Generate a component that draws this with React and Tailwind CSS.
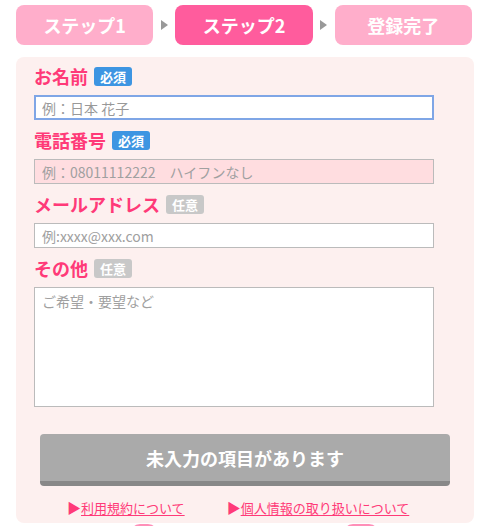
import React from "react";

const font = { fontFamily: '"Noto Sans CJK JP", "Noto Sans", sans-serif' };

const Badge = ({ required }) => (
    <span
        className={`ml-[6px] inline-flex h-[19px] w-[38px] items-center justify-center rounded-[3px] text-[13px] font-bold leading-none text-white ${required ? "bg-[#3d95e2]" : "bg-[#c8c8c8]"}`}
    >
        {required ? "必須" : "任意"}
    </span>
);

const Field = ({ label, required, children, first }) => (
    <div className={first ? "" : "mt-[9px]"}>
        <div className="flex h-[22px] items-center">
            <span className="text-[18px] font-bold leading-none text-[#ff3a78]">{label}</span>
            <Badge required={required} />
        </div>
        <div className="mt-[8px]">{children}</div>
    </div>
);

const Step = ({ label, active }) => (
    <div
        className={`flex h-[40px] w-[138px] items-center justify-center rounded-[8px] text-[18px] font-bold text-white ${active ? "bg-[#ff5c9d]" : "bg-[#ffaecb]"}`}
    >
        {label}
    </div>
);

const Arrow = () => (
    <div className="flex w-[22px] items-center justify-center">
        <svg width="7" height="10" viewBox="0 0 7 10">
            <polygon points="0,0 7,5 0,10" fill="#999" />
        </svg>
    </div>
);

export default function App() {
    return (
        <div className="min-h-[526px] bg-white" style={font}>
            {/* Steps */}
            <div className="flex px-[16px] pt-[5px]">
                <Step label="ステップ1" />
                <Arrow />
                <Step label="ステップ2" active />
                <Arrow />
                <Step label="登録完了" />
            </div>

            {/* Form panel */}
            <div className="mx-[16px] mt-[12px] w-[458px] rounded-[8px] bg-[#fdf0ef] pb-[7px] pl-[18px] pt-[8px]">
                <Field label="お名前" required first>
                    <input
                        type="text"
                        placeholder="例：日本 花子"
                        className="block h-[25px] w-[400px] border-2 border-[#7fa6e6] bg-white px-[6px] text-[14px] text-[#333] outline-none placeholder:text-[#999]"
                    />
                </Field>
                <Field label="電話番号" required>
                    <input
                        type="text"
                        placeholder="例：08011112222　ハイフンなし"
                        className="block h-[25px] w-[400px] border border-[#bbbbbb] bg-[#ffdde0] px-[7px] text-[14px] text-[#333] outline-none placeholder:text-[#a0a0a0]"
                    />
                </Field>
                <Field label="メールアドレス">
                    <input
                        type="text"
                        placeholder="例:xxxx@xxx.com"
                        className="block h-[25px] w-[400px] border border-[#bbbbbb] bg-white px-[7px] text-[14px] text-[#333] outline-none placeholder:text-[#a0a0a0]"
                    />
                </Field>
                <Field label="その他">
                    <textarea
                        placeholder="ご希望・要望など"
                        className="block h-[120px] w-[400px] resize-none border border-[#bbbbbb] bg-white px-[7px] py-[3px] text-[14px] text-[#333] outline-none placeholder:text-[#a0a0a0]"
                    />
                </Field>

                {/* Submit */}
                <div className="mt-[27px] pl-[6px]">
                    <button
                        type="button"
                        className="flex h-[52px] w-[410px] items-center justify-center rounded-[4px] border-b-[5px] border-[#888888] bg-[#aaaaaa] pt-[2px] text-[18px] font-bold text-white"
                    >
                        未入力の項目があります
                    </button>
                </div>

                {/* Links */}
                <div className="mt-[12px] flex h-[18px] items-center pl-[33px] text-[13px] leading-none text-[#ff3a78]">
                    <a href="#" className="flex items-center">
                        <span className="text-[14px]">▶</span>
                        <span className="underline underline-offset-2">利用規約について</span>
                    </a>
                    <a href="#" className="ml-[42px] flex items-center">
                        <span className="text-[14px]">▶</span>
                        <span className="underline underline-offset-2">個人情報の取り扱いについて</span>
                    </a>
                </div>
            </div>

            {/* Bottom edge decorations */}
            <div className="relative h-[10px]">
                <div className="absolute left-[130px] top-[1px] h-[20px] w-[28px] rounded-full bg-[#ff8fb8]" />
                <div className="absolute left-[343px] top-[1px] h-[20px] w-[36px] rounded-full bg-[#ff8fb8]" />
            </div>
        </div>
    );
}
